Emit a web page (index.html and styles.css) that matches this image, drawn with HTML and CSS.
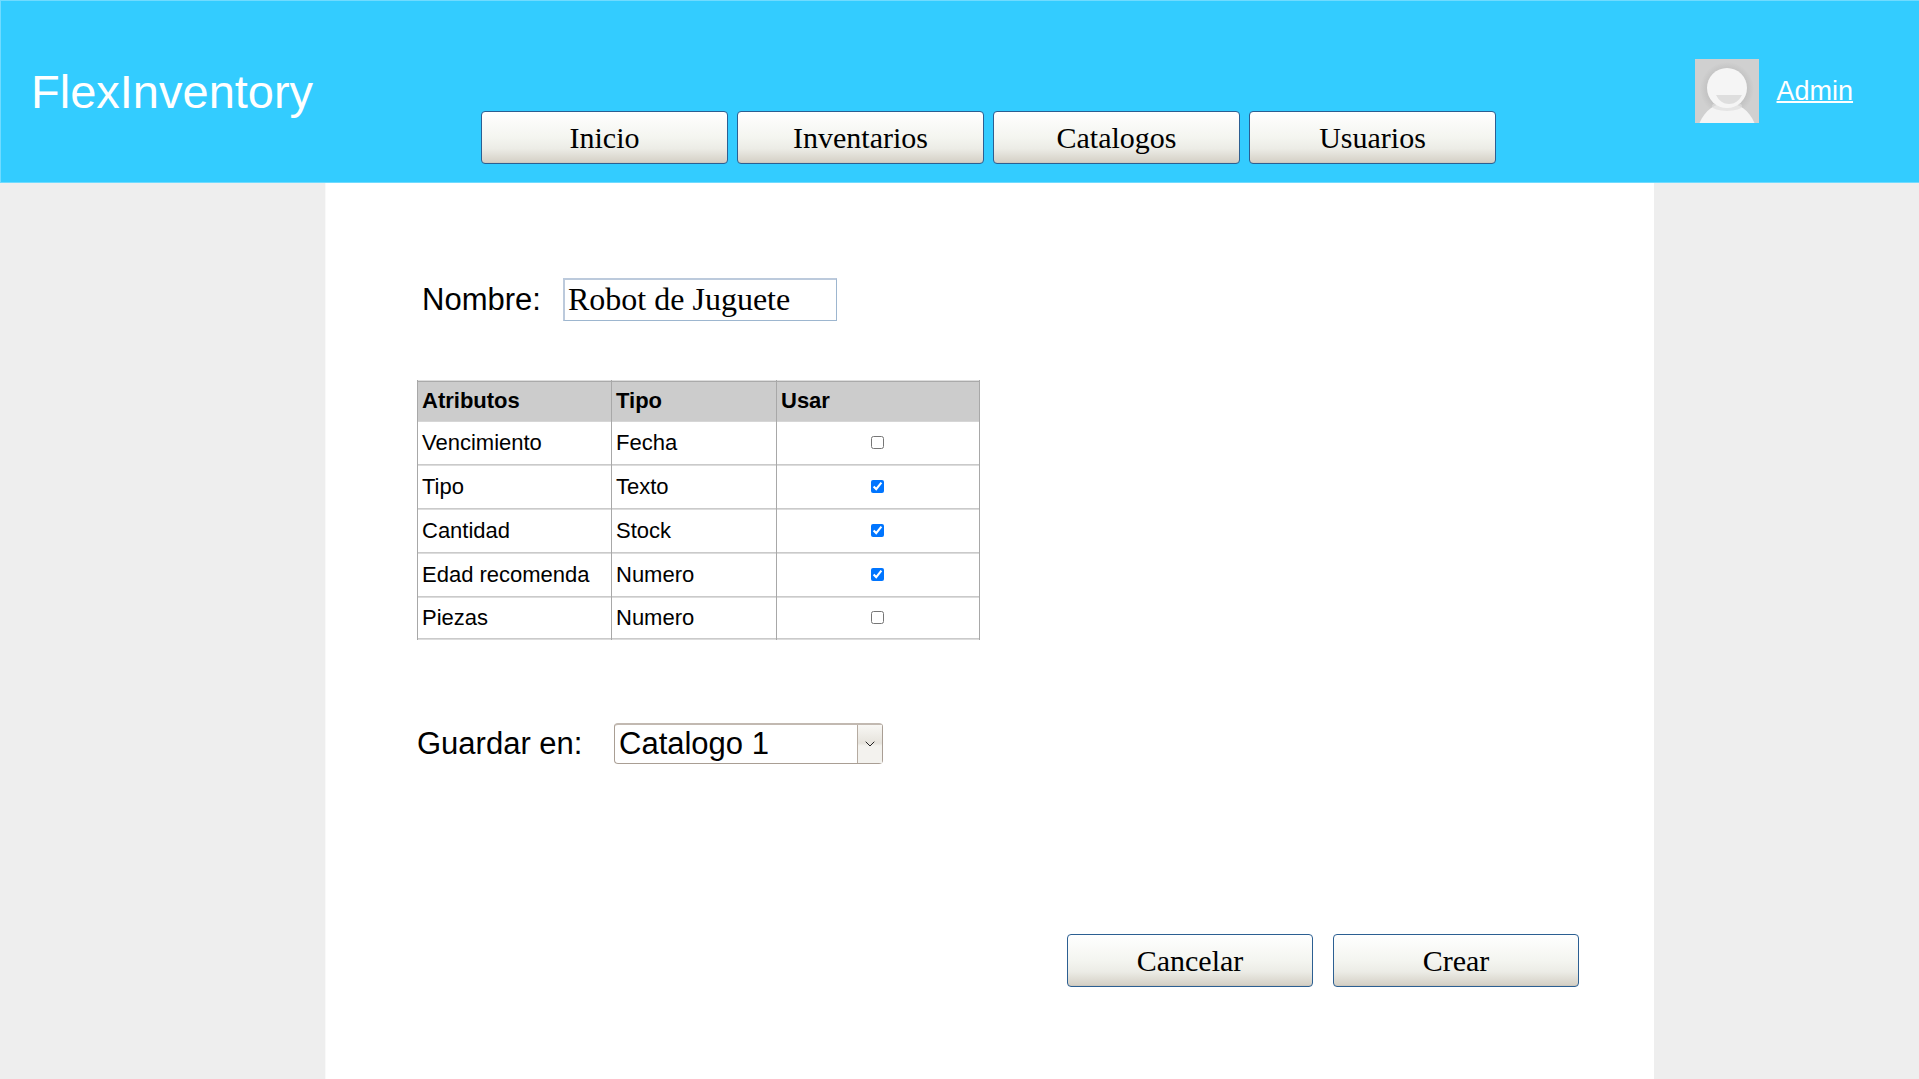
FILE: index.html
```html
<!DOCTYPE html>
<html lang="es">
<head>
<meta charset="utf-8">
<title>FlexInventory</title>
<link rel="stylesheet" href="styles.css">
</head>
<body>
<header class="topbar">
  <div class="brand">FlexInventory</div>
  <nav class="nav">
    <button class="btn">Inicio</button>
    <button class="btn">Inventarios</button>
    <button class="btn">Catalogos</button>
    <button class="btn">Usuarios</button>
  </nav>
  <div class="account">
    <svg class="avatar" viewBox="0 0 64 64">
      <defs>
        <radialGradient id="shade"><stop offset=".72" stop-color="#b4b4b4"/><stop offset="1" stop-color="#b4b4b4" stop-opacity="0"/></radialGradient>
      </defs>
      <rect width="64" height="64" fill="#d0d0d0"/>
      <circle cx="32" cy="30" r="27" fill="url(#shade)" opacity=".5"/>
      <path d="M4.500 64C10 51 20 44 32 44S54 51 59.500 64Z" fill="#f4f4f4"/>
      <ellipse cx="32" cy="47" rx="15" ry="5" fill="#dedede" opacity=".7"/>
      <circle cx="32" cy="29" r="20" fill="#f5f5f5"/>
      <path d="M21 36H47C44 42 39.500 45 34 45S24 42 21 36Z" fill="#dedede"/>
    </svg>
    <a class="account-link" href="#">Admin</a>
  </div>
</header>
<div class="workspace">
  <main class="panel">
    <div class="field name-field">
      <label for="name">Nombre:</label>
      <input id="name" class="name-input" type="text" value="Robot de Juguete">
    </div>
    <table class="attributes">
      <colgroup><col class="col-name"><col class="col-type"><col class="col-use"></colgroup>
      <thead><tr><th>Atributos</th><th>Tipo</th><th>Usar</th></tr></thead>
      <tbody>
        <tr><td>Vencimiento</td><td>Fecha</td><td class="use"><input type="checkbox"></td></tr>
        <tr><td>Tipo</td><td>Texto</td><td class="use"><input type="checkbox" checked></td></tr>
        <tr><td>Cantidad</td><td>Stock</td><td class="use"><input type="checkbox" checked></td></tr>
        <tr><td>Edad recomenda</td><td>Numero</td><td class="use"><input type="checkbox" checked></td></tr>
        <tr class="last"><td>Piezas</td><td>Numero</td><td class="use"><input type="checkbox"></td></tr>
      </tbody>
    </table>
    <div class="field save-field">
      <span>Guardar en:</span>
      <div class="combo">
        <span class="combo-value">Catalogo 1</span>
        <span class="combo-arrow"><svg width="10" height="6" viewBox="0 0 10 6"><path d="M.7.7L5 5L9.300.7" fill="none" stroke="#222" stroke-width="1"/></svg></span>
      </div>
    </div>
    <div class="actions">
      <button class="btn">Cancelar</button>
      <button class="btn">Crear</button>
    </div>
  </main>
</div>
</body>
</html>
```
FILE: styles.css
```css
* { box-sizing: border-box; }
body {
  margin: 0;
  height: 1079px;
  display: flex;
  flex-direction: column;
  overflow: hidden;
  background: #eee;
  color: #000;
  font-family: "Liberation Sans", Arial, sans-serif;
}
.topbar {
  flex: none;
  height: 183px;
  display: grid;
  grid-template-columns: 480px 1015px 1fr;
  background: #3cf;
  border: solid #70dbff;
  border-width: 1px 0 1px 1px;
}
.brand {
  padding: 64px 0 0 30px;
  color: #fff;
  font-size: 47px;
  line-height: 54px;
}
.nav {
  display: flex;
  gap: 9px;
  padding-top: 110px;
}
.btn {
  flex: none;
  width: 247px;
  height: 53px;
  padding: 0;
  border: 1px solid #2c5f92;
  border-radius: 4px;
  background: linear-gradient(#fff 0%, #f4f5f0 50%, #ecece6 72%, #d6d2c8 97%, #c8c4ba 100%);
  color: #000;
  font: 30px/50px "Liberation Serif", "Times New Roman", serif;
}
.account {
  display: flex;
  align-items: flex-start;
  gap: 18px;
  padding: 58px 0 0 198.5px;
}
.avatar {
  flex: none;
  width: 64px;
  height: 64px;
}
.account-link {
  padding-top: 17px;
  color: #fff;
  font-size: 27px;
  line-height: 31px;
  text-decoration-thickness: 2px;
}
.workspace {
  flex: 1;
  display: flex;
  padding: 0 265px 0 325px;
}
.panel {
  flex: 1;
  padding: 95px 75px 0 91px;
  border-left: 1px solid #f9f9f9;
  background: #fff;
}
.field {
  display: flex;
  font-size: 31px;
  line-height: 36px;
}
.name-field {
  padding-left: 5px;
}
.name-field label {
  width: 141px;
  padding-top: 4px;
}
.name-input {
  width: 274px;
  height: 43px;
  padding: 0 3px 2px;
  border: solid;
  border-width: 2px 1px 1px 2px;
  border-color: #bccadc #9db6cf #9db6cf #bccadc;
  font: 32px "Liberation Serif", "Times New Roman", serif;
}
.attributes {
  margin-top: 59px;
  width: 563px;
  table-layout: fixed;
  border-collapse: separate;
  border-spacing: 0;
  font-size: 22px;
  line-height: 25px;
}
.col-name { width: 194px; }
.col-type { width: 165px; }
.col-use { width: 204px; }
.attributes th, .attributes td {
  height: 44px;
  padding: 0 0 4px 4px;
  border-left: 1px solid #a8a8a8;
  box-shadow: inset 0 -1px #dcdcdc, inset 0 -2px #cacaca;
  text-align: left;
  white-space: nowrap;
}
.attributes th:last-child, .attributes td:last-child {
  border-right: 1px solid #a8a8a8;
}
.attributes th {
  height: 42px;
  padding-bottom: 1px;
  background: #ccc;
  box-shadow: inset 0 -1px #d6d6d6, inset 0 1px #dedede, inset 0 2px #aaa;
}
.attributes .last td { height: 42px; }
.attributes .use {
  padding-left: 0;
  padding-right: 1px;
  text-align: center;
  line-height: 0;
}
.use input {
  width: 13px;
  height: 13px;
  margin: 0;
}
.save-field {
  margin-top: 83px;
}
.save-field > span {
  width: 197px;
  padding-top: 3px;
}
.combo {
  display: flex;
  width: 269px;
  height: 41px;
  border: 1px solid #a99e94;
  border-top: 2px solid #c2b9b1;
  border-radius: 4px;
}
.combo-value {
  flex: 1;
  padding: 1px 4px 0;
}
.combo-arrow {
  display: flex;
  align-items: center;
  justify-content: center;
  width: 25px;
  border-left: 1px solid #b5aba1;
  background: linear-gradient(#f8f7f4, #e6e3dc 48%, #f3f2ee 55%, #f3f2ee);
}
.actions {
  display: flex;
  justify-content: flex-end;
  gap: 20px;
  margin-top: 170px;
}
.actions .btn { width: 246px; }
```
